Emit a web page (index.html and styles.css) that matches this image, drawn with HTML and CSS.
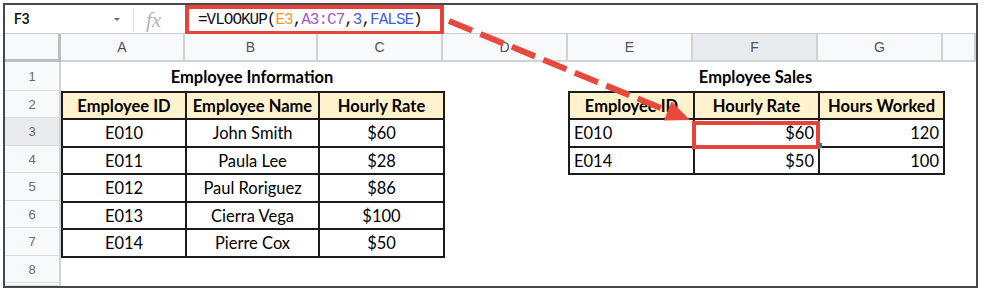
FILE: index.html
```html
<!DOCTYPE html>
<html>
<head>
<meta charset="utf-8">
<link rel="stylesheet" href="styles.css">
</head>
<body>
<div class="frame">
  <div class="fbar">
    <div class="namebox"><span class="ref">F3</span><span class="caret"></span></div>
    <div class="fx">fx</div>
    <div class="formula">=VLOOKUP(<span class="c-orange">E3</span>,<span class="c-purple">A3:C7</span>,<span class="c-blue">3</span>,<span class="c-blue">FALSE</span>)</div>
  </div>
  <div class="colheads">
    <div class="corner"></div>
    <div class="ch">A</div>
    <div class="ch">B</div>
    <div class="ch">C</div>
    <div class="ch">D</div>
    <div class="ch">E</div>
    <div class="ch sel">F</div>
    <div class="ch">G</div>
    <div class="ch"></div>
  </div>
  <div class="body">
    <div class="rh r1">1</div>
    <div class="rh r2">2</div>
    <div class="rh r3 sel">3</div>
    <div class="rh r4">4</div>
    <div class="rh r5">5</div>
    <div class="rh r6">6</div>
    <div class="rh r7">7</div>
    <div class="rh r8">8</div>
    <div class="rh r9"></div>

    <div class="title t-left">Employee Information</div>
    <div class="tbl-left">
      <table class="tbl">
        <colgroup><col class="w124"><col class="w133"><col class="w125"></colgroup>
        <tr class="h27 head"><th>Employee ID</th><th>Employee Name</th><th>Hourly Rate</th></tr>
        <tr class="h28"><td>E010</td><td>John Smith</td><td>$60</td></tr>
        <tr class="h27"><td>E011</td><td>Paula Lee</td><td>$28</td></tr>
        <tr class="h28"><td>E012</td><td>Paul Roriguez</td><td>$86</td></tr>
        <tr class="h27"><td>E013</td><td>Cierra Vega</td><td>$100</td></tr>
        <tr class="h28"><td>E014</td><td>Pierre Cox</td><td>$50</td></tr>
      </table>
    </div>

    <div class="title t-right">Employee Sales</div>
    <div class="tbl-right">
      <table class="tbl">
        <colgroup><col class="w125"><col class="w125"><col class="w125"></colgroup>
        <tr class="h27 head"><th>Employee ID</th><th>Hourly Rate</th><th>Hours Worked</th></tr>
        <tr class="h28"><td class="l">E010</td><td class="r active">$60<span class="handle"></span></td><td class="r">120</td></tr>
        <tr class="h27"><td class="l">E014</td><td class="r">$50</td><td class="r">100</td></tr>
      </table>
    </div>
  </div>
  <svg class="arrow" width="983" height="291" viewBox="0 0 983 291">
    <line x1="449" y1="21" x2="668" y2="111" stroke="#e8493f" stroke-width="6" stroke-dasharray="25 9"/>
    <polygon points="690,120 664,120.5 671.5,101.5" fill="#e8493f"/>
  </svg>
</div>
</body>
</html>
```
FILE: styles.css
```css
* { box-sizing: border-box; }
body {
  margin: 0;
  padding: 3px;
  background: #fff;
}
.frame {
  position: relative;
  width: 975px;
  height: 285px;
  border: 2px solid #474747;
  background: #fff;
  overflow: hidden;
}
.fbar {
  display: flex;
  height: 29px;
  border-bottom: 1px solid #cfcfcf;
}
.namebox {
  width: 128px;
  display: flex;
  align-items: center;
  padding-left: 9px;
  padding-right: 13px;
}
.ref {
  font-family: Roboto, "Liberation Sans", sans-serif;
  font-weight: 500;
  font-size: 14px;
  color: #111;
  flex: 1;
}
.caret {
  width: 0;
  height: 0;
  border-left: 3px solid transparent;
  border-right: 3px solid transparent;
  border-top: 3px solid #666;
}
.fx {
  width: 52px;
  margin: 3px 0 1px;
  border-left: 1px solid #dadce0;
  padding-left: 12px;
  font-family: "Liberation Serif", serif;
  font-style: italic;
  font-size: 21px;
  color: #b5b5b5;
  line-height: 24px;
}
.formula {
  width: 259px;
  height: 30px;
  border: 4px solid #e5443b;
  padding-left: 9px;
  font-family: "Liberation Mono", monospace;
  font-size: 16px;
  letter-spacing: -1px;
  line-height: 22px;
  color: #111;
  white-space: nowrap;
}
.c-orange { color: #ef9a2a; }
.c-purple { color: #a35ac6; }
.c-blue { color: #4662d2; }

.colheads {
  display: grid;
  grid-template-columns: 56px 124px 133px 125px 125px 125px 125px 125px 33px;
  height: 28px;
}
.corner {
  background: #f8f9fa;
  border-right: 3px solid #bdbdbd;
  border-bottom: 3px solid #bdbdbd;
}
.ch {
  background: #f8f9fa;
  border-right: 2px solid #d2d2d2;
  border-bottom: 2px solid #d2d2d2;
  display: flex;
  align-items: center;
  justify-content: center;
  font-family: "Liberation Sans", Arial, sans-serif;
  font-size: 14px;
  color: #4d535b;
}
.ch.sel { background: #e8eaed; }

.body {
  display: grid;
  grid-template-columns: 56px 124px 133px 125px 125px 125px 125px 125px 33px;
  grid-template-rows: 29px 27px 28px 27px 28px 27px 28px 27px 3px;
}
.rh {
  grid-column: 1;
  background: #f8f9fa;
  border-right: 2px solid #d2d2d2;
  border-bottom: 1px solid #dcdcdc;
  display: flex;
  align-items: center;
  justify-content: center;
  font-family: "Liberation Sans", Arial, sans-serif;
  font-size: 13px;
  color: #6a6a6a;
}
.rh.sel { background: #e8eaed; }
.r1 { grid-row: 1; }
.r2 { grid-row: 2; }
.r3 { grid-row: 3; }
.r4 { grid-row: 4; }
.r5 { grid-row: 5; }
.r6 { grid-row: 6; }
.r7 { grid-row: 7; }
.r8 { grid-row: 8; }
.r9 { grid-row: 9; }

.title {
  grid-row: 1;
  display: flex;
  align-items: center;
  justify-content: center;
  font-family: Lato, "Open Sans", sans-serif;
  font-weight: 700;
  font-size: 16.5px;
  color: #000;
}
.t-left { grid-column: 2 / 5; }
.t-right { grid-column: 6 / 9; }
.tbl-left { grid-column: 2 / 5; grid-row: 2 / 8; }
.tbl-right { grid-column: 6 / 9; grid-row: 2 / 5; }

.tbl {
  border-collapse: collapse;
  table-layout: fixed;
  width: 100%;
  font-family: Lato, "Open Sans", sans-serif;
  font-size: 16.5px;
  color: #000;
}
.w124 { width: 124px; }
.w133 { width: 133px; }
.w125 { width: 125px; }
.h27 { height: 27px; }
.h28 { height: 28px; }
.tbl th, .tbl td {
  border: 2px solid #1c1c1c;
  padding: 0 4px;
  text-align: center;
  white-space: nowrap;
  line-height: 20px;
}
.tbl th {
  background: #fff2cc;
  font-weight: 700;
}
.tbl td.l { text-align: left; }
.tbl td.r { text-align: right; }
.active { position: relative; }
.active::after {
  content: "";
  position: absolute;
  left: -3px;
  right: -2px;
  top: 1px;
  bottom: -3px;
  border: 4px solid #e5443b;
}
.handle {
  position: absolute;
  right: -4px;
  bottom: -2px;
  width: 4px;
  height: 5px;
  background: #1a73e8;
}
.arrow {
  position: absolute;
  left: -5px;
  top: -5px;
  pointer-events: none;
}
```
